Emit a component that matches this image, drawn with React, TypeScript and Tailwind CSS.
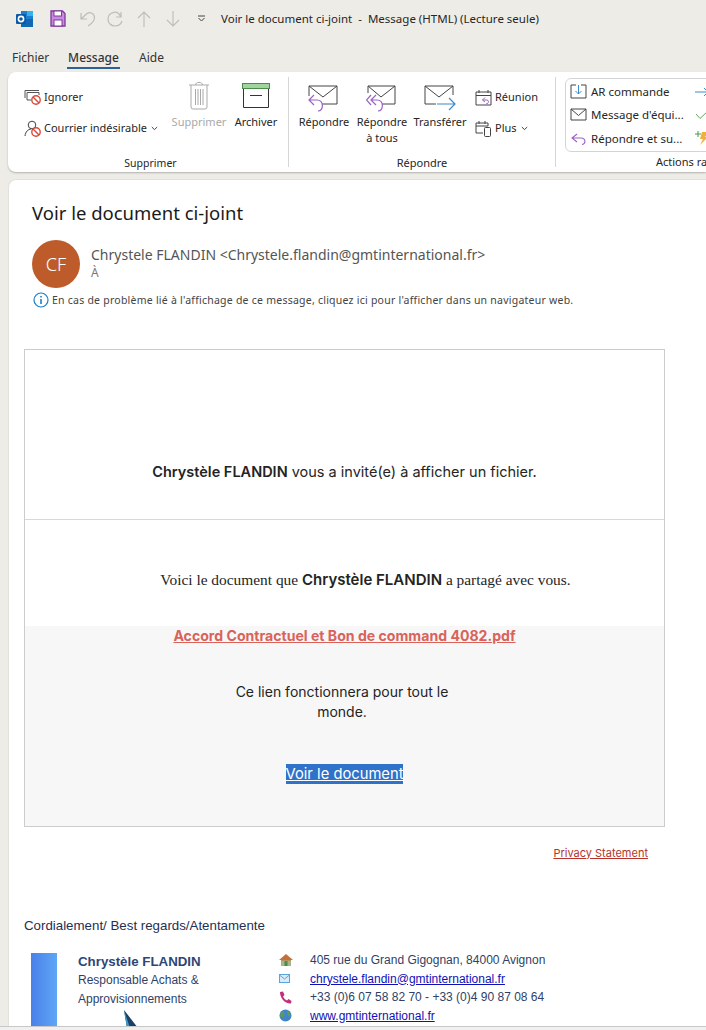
import * as React from 'react';

const UI_FONT = "font-['Noto_Sans',sans-serif]";

function Svg({ w, h, children, className }: { w: number; h: number; children: React.ReactNode; className?: string }) {
  return (
    <svg width={w} height={h} viewBox={`0 0 ${w} ${h}`} fill="none" className={`shrink-0 ${className ?? ''}`}>
      {children}
    </svg>
  );
}

function OutlookLogo() {
  return (
    <Svg w={18} h={18}>
      <rect x="5" y="1" width="12" height="15" fill="#1d7fd0" />
      <rect x="11" y="1" width="6" height="5" fill="#38b0ea" />
      <path d="M5 9 L17 9 L17 17 L5 17 Z" fill="#1268b3" />
      <rect x="0" y="4" width="10" height="10" rx="1" fill="#0c5aa6" />
      <circle cx="5" cy="9" r="2.6" stroke="#fff" strokeWidth="1.6" />
    </Svg>
  );
}

function SaveIcon() {
  return (
    <Svg w={16} h={17} className="ml-4">
      <path d="M1 1 H12.5 L15 3.5 V16 H1 Z" fill="#c78be0" stroke="#7d3a98" strokeWidth="1.3" />
      <rect x="4" y="1" width="7.5" height="5" fill="#fff" stroke="#7d3a98" />
      <rect x="4" y="10" width="8" height="6" fill="#fff" stroke="#7d3a98" />
    </Svg>
  );
}

function QuickIcons() {
  const c = '#bdbdb8';
  return (
    <>
      <Svg w={16} h={16} className="ml-[14px]">
        <path d="M1 2 V8 H7 M1.5 7.5 L7 2.5 C10 0.5 14.5 2.5 14.5 6.5 C14.5 9.5 12 12.5 8 15" stroke={c} strokeWidth="1.2" />
      </Svg>
      <Svg w={16} h={16} className="ml-[11px]">
        <path d="M14 1 V6 H9 M13.5 5.5 C12 2 9 1 7 1.3 C3.5 2 1 4.5 1 8 C1 12 4 15 8 15 C11.5 15 14 13 15 10" stroke={c} strokeWidth="1.2" />
      </Svg>
      <Svg w={14} h={16} className="ml-[14px]">
        <path d="M7 16 V1 M1 7 L7 1 L13 7" stroke={c} strokeWidth="1.1" />
      </Svg>
      <Svg w={14} h={16} className="ml-[15px]">
        <path d="M7 0 V15 M1 9 L7 15 L13 9" stroke={c} strokeWidth="1.1" />
      </Svg>
    </>
  );
}

function Ban({ x, y }: { x: number; y: number }) {
  return (
    <g>
      <circle cx={x} cy={y} r="4.2" fill="#fff" stroke="#d9483b" strokeWidth="1.4" />
      <path d={`M${x - 3} ${y - 3} L${x + 3} ${y + 3}`} stroke="#d9483b" strokeWidth="1.4" />
    </g>
  );
}

function IgnoreIcon() {
  return (
    <Svg w={17} h={16}>
      <path d="M1 1.5 H15 M1 1.5 V9 M3 3.5 H15 V6 M3 3.5 V11 H7" stroke="#555" strokeWidth="1" />
      <Ban x={12} y={11} />
    </Svg>
  );
}

function JunkIcon() {
  return (
    <Svg w={17} h={17}>
      <circle cx="8" cy="5" r="3.8" stroke="#444" />
      <path d="M1 16 C1.5 11.5 4 9.5 7 9" stroke="#444" />
      <Ban x={12} y={12} />
    </Svg>
  );
}

function TrashIcon() {
  const c = '#a9a9a9';
  return (
    <Svg w={22} h={29}>
      <path d="M1 4 H21 M7.5 4 C7.5 0.5 14.5 0.5 14.5 4" stroke={c} />
      <path d="M3 4 V26 Q3 28 5 28 H17 Q19 28 19 26 V4" stroke={c} />
      <path d="M7.5 8 V24 M10 8 V24 M12.5 8 V24 M15 8 V24" stroke={c} />
    </Svg>
  );
}

function ArchiveIcon() {
  return (
    <Svg w={28} h={25}>
      <rect x="0.5" y="0.5" width="27" height="5" fill="#9fd59c" stroke="#4d8a4d" />
      <path d="M1.5 6 V24.5 H26.5 V6" stroke="#333" />
      <path d="M8 12.5 H20" stroke="#333" />
    </Svg>
  );
}

function ReplyIcon() {
  return (
    <Svg w={32} h={28}>
      <path d="M1 1 H29 V19 H14 M1 1 V11 M1 1 L15 12 L29 1" stroke="#444" fill="none" />
      <path d="M6 10 L1 15 L6 20 M1 15 H9 C16 15 16 26 10 26" stroke="#9a63c4" strokeWidth="1.2" />
    </Svg>
  );
}

function ReplyAllIcon() {
  return (
    <Svg w={32} h={28}>
      <path d="M2 1 H29 V19 H16 M2 1 V8 M2 1 L15 12 L29 1" stroke="#444" />
      <path d="M5 10 L0.5 15 L5 20 M10 10 L5 15 L10 20 M5 15 H11 C18 15 18 26 12 26" stroke="#9a63c4" strokeWidth="1.2" />
    </Svg>
  );
}

function ForwardIcon() {
  return (
    <Svg w={32} h={28}>
      <path d="M1 19 V1 H29 V10 M1 19 H12" stroke="#444" />
      <path d="M1 1 L15 12 L29 1" stroke="#444" />
      <path d="M13 19 H30 M25 13 L31 19 L25 25" stroke="#3a8cc7" strokeWidth="1.2" />
    </Svg>
  );
}

function MeetingIcon() {
  return (
    <Svg w={17} h={17}>
      <path d="M1 3 H16 V16 H1 Z M1 6.5 H16 M4 1 V4 M13 1 V4" stroke="#444" />
      <path d="M10 8.5 L7.5 11 L10 13 M7.5 11 H12 C14 11 14 15 11 15" stroke="#9a63c4" />
    </Svg>
  );
}

function MoreIcon() {
  return (
    <Svg w={17} h={17}>
      <path d="M1 13 V3 H13 V6 M1 6 H13 M4 1 V4 M10 1 V4 M1 13 H8" stroke="#444" />
      <rect x="9.5" y="7.5" width="6" height="9" rx="1" fill="#fff" stroke="#444" />
    </Svg>
  );
}

function Chevron() {
  return (
    <svg width="7" height="5" viewBox="0 0 7 5" fill="none" className="ml-[1px] shrink-0">
      <path d="M0.8 1 L3.5 3.6 L6.2 1" stroke="#444" />
    </svg>
  );
}

function BigButton({
  icon,
  label,
  disabled,
  className,
  iconClass = 'items-start pt-[1px]',
}: {
  icon: React.ReactNode;
  label: React.ReactNode;
  disabled?: boolean;
  className?: string;
  iconClass?: string;
}) {
  return (
    <div className={`flex flex-col items-center ${className ?? ''}`}>
      <div className={`flex h-[33px] ${iconClass}`}>{icon}</div>
      <div className={`mt-[1px] text-center text-[11px] leading-[16px] whitespace-nowrap ${disabled ? 'text-[#a9a9a9]' : 'text-[#262626]'}`}>
        {label}
      </div>
    </div>
  );
}

function QuickStep({ icon, label }: { icon: React.ReactNode; label: string }) {
  return (
    <div className="flex h-6 items-center gap-[4px] text-[11.5px] whitespace-nowrap text-[#262626]">
      <span className="flex w-[17px] justify-center">{icon}</span>
      {label}
    </div>
  );
}

function Ribbon() {
  return (
    <div className={`ml-2 flex h-[100px] shrink-0 overflow-hidden rounded-l-lg bg-white shadow-[0_1px_2px_rgba(0,0,0,0.25)] ${UI_FONT}`}>
      {/* Supprimer */}
      <div className="flex w-[280px] shrink-0 flex-col">
        <div className="flex h-[78px] pt-[8px]">
          <div className="ml-4 flex w-[147px] flex-col gap-[15px] pt-[9px] text-[11px] text-[#262626]">
            <div className="flex h-4 items-center gap-[3px]">
              <IgnoreIcon />
              Ignorer
            </div>
            <div className="flex h-4 items-center gap-[3px]">
              <JunkIcon />
              Courrier indésirable
              <Chevron />
            </div>
          </div>
          <BigButton icon={<TrashIcon />} label="Supprimer" disabled className="w-[56px]" />
          <BigButton icon={<ArchiveIcon />} label="Archiver" iconClass="items-start pt-[3px]" className="ml-[6px] w-[46px]" />
        </div>
        <div className="pt-[5px] pl-[5px] text-center text-[10.5px] leading-4 text-[#262626]">Supprimer</div>
      </div>
      <div className="my-[5px] w-px shrink-0 bg-[#d6d6d6]" />
      {/* Répondre */}
      <div className="flex w-[266px] shrink-0 flex-col">
        <div className="flex h-[78px] pt-[8px] pl-[9px]">
          <BigButton icon={<ReplyIcon />} label="Répondre" iconClass="items-end" className="w-[52px]" />
          <BigButton icon={<ReplyAllIcon />} label={<>Répondre<br />à tous</>} iconClass="items-end" className="ml-[6px] w-[52px]" />
          <BigButton icon={<ForwardIcon />} label="Transférer" iconClass="items-end" className="ml-[6px] w-[52px]" />
          <div className="ml-[9px] flex flex-col gap-[15px] pt-[9px] text-[11px] text-[#262626]">
            <div className="flex h-4 items-center gap-[3px]">
              <MeetingIcon />
              Réunion
            </div>
            <div className="flex h-4 items-center gap-[3px]">
              <MoreIcon />
              Plus
              <Chevron />
            </div>
          </div>
        </div>
        <div className="pt-[5px] text-center text-[11px] leading-4 text-[#262626]">Répondre</div>
      </div>
      <div className="my-[5px] w-px shrink-0 bg-[#d6d6d6]" />
      {/* Actions rapides, cut off by the window edge */}
      <div className="flex w-[300px] shrink-0 flex-col pl-[9px]">
        <div className="mt-[6px] flex h-[74px] w-[200px] rounded-md border border-[#d4d4d4] py-[1px] pl-[4px]">
          <div className="flex w-[125px] shrink-0 flex-col">
            <QuickStep
              label="AR commande"
              icon={
                <Svg w={17} h={15}>
                  <path d="M6 1 H1 V14 H16 V1 H11" stroke="#444" />
                  <path d="M8.5 1 V10 M5.5 7 L8.5 10 L11.5 7" stroke="#3a8cc7" />
                </Svg>
              }
            />
            <QuickStep
              label="Message d'équi..."
              icon={
                <Svg w={17} h={13}>
                  <path d="M1 1 H16 V12 H1 Z M1 1 L8.5 7.5 L16 1" stroke="#444" />
                </Svg>
              }
            />
            <QuickStep
              label="Répondre et su..."
              icon={
                <Svg w={16} h={14}>
                  <path d="M6 3 L1 7 L6 11 M1 7 H10 C15 7 15 13 11 13.5" stroke="#9a63c4" strokeWidth="1.1" />
                </Svg>
              }
            />
          </div>
          <div className="flex flex-col">
            <div className="flex h-6 items-center">
              <Svg w={14} h={10}>
                <path d="M0 5 H14 M9 1 L13 5 L9 9" stroke="#3a8cc7" />
              </Svg>
            </div>
            <div className="flex h-6 items-center">
              <Svg w={14} h={10}>
                <path d="M1 4 L5 8.5 L13 1" stroke="#5fa85f" />
              </Svg>
            </div>
            <div className="flex h-6 items-center">
              <Svg w={14} h={16}>
                <path d="M0 4 H6 M3 1 V7" stroke="#4d9a4d" />
                <path d="M7 2 H14 L10 7 H13 L5 15 L8 9 H5 Z" fill="#f0b040" />
              </Svg>
            </div>
          </div>
        </div>
        <div className="pt-[2px] pl-[91px] text-[11px] leading-4 whitespace-nowrap text-[#262626]">Actions rapides</div>
      </div>
    </div>
  );
}

function EmailBody() {
  return (
    <div className="mt-[40px] ml-[15px] w-[641px] shrink-0 border border-[#cccccc] bg-white">
      <div className="flex h-[170px] items-end justify-center border-b border-[#d8d8d8] pb-[37px] font-['Inter',sans-serif] text-[14.5px] leading-5 text-[#242424]">
        <div>
          <span className="font-semibold">Chrystèle FLANDIN</span> vous a invité(e) à afficher un fichier.
        </div>
      </div>
      <div className="flex h-[106px] items-start justify-center pt-[50px] pl-[42px] font-['Liberation_Serif',serif] text-[15.4px] leading-5 text-[#242424]">
        <div>
          Voici le document que{' '}
          <span className="font-['Inter',sans-serif] text-[15px] font-semibold">Chrystèle FLANDIN</span> a partagé avec vous.
        </div>
      </div>
      <div className="flex h-[200px] flex-col items-center bg-[#f7f7f7] font-['Inter',sans-serif] text-[#242424]">
        <a className="mt-[1px] text-[14.1px] leading-[18px] font-bold text-[#d9635a] underline">
          Accord Contractuel et Bon de command 4082.pdf
        </a>
        <div className="mt-[37px] mr-[5px] w-[240px] text-center text-[14px] leading-5">Ce lien fonctionnera pour tout le monde.</div>
        <a className="mt-[42px] bg-[#2f72c9] text-[14.75px] leading-5 text-white underline">Voir le document</a>
      </div>
    </div>
  );
}

function Signature() {
  return (
    <div className="mt-[18px] ml-[22px] flex h-[73px] shrink-0 overflow-hidden font-['Liberation_Sans',sans-serif] text-[#2f3f66]">
      <div className="h-full w-[26px] shrink-0 bg-gradient-to-r from-[#4a80ea] to-[#5fa6f5]" />
      <div className="relative ml-[21px] w-[201px] shrink-0">
        <div className="text-[13.3px] leading-[18px] font-bold text-[#2e4674]">Chrystèle FLANDIN</div>
        <div className="text-[12px] leading-[19px]">Responsable Achats &amp;</div>
        <div className="text-[12px] leading-[19px]">Approvisionnements</div>
        <svg width="18" height="18" viewBox="0 0 18 18" className="absolute top-[57px] left-[44px]">
          <path d="M2 0 L16 18 H5 Z" fill="#1c3f66" />
          <path d="M2 0 L5 18 H8 Z" fill="#3f9ac9" />
        </svg>
      </div>
      <div className="-mt-[2px] flex flex-col text-[12px] leading-[18.5px]">
        <div className="flex h-[18.5px] items-center">
          <span className="w-[31px]">
            <Svg w={14} h={13}>
              <path d="M7 0 L14 6 H12 V12 H2 V6 H0 Z" fill="#c2703c" />
              <rect x="2" y="6.5" width="10" height="5.5" fill="#a8b58a" />
              <rect x="5.5" y="7" width="3" height="5" fill="#4e8a4e" />
            </Svg>
          </span>
          405 rue du Grand Gigognan, 84000 Avignon
        </div>
        <div className="flex h-[18.5px] items-center">
          <span className="w-[31px]">
            <Svg w={11} h={9}>
              <rect x="0.5" y="0.5" width="10" height="8" fill="#d8ebfa" stroke="#5ba3dd" />
              <path d="M0.5 1 L5.5 5 L10.5 1" stroke="#5ba3dd" />
            </Svg>
          </span>
          <a className="text-[#1010b8] underline">chrystele.flandin@gmtinternational.fr</a>
        </div>
        <div className="flex h-[18.5px] items-center">
          <span className="w-[31px]">
            <Svg w={13} h={13}>
              <path d="M1 1 L4 0.5 L5.5 4 L4 5.5 C5 7.5 6 8.5 8 9.5 L9.5 8 L12.5 10 L12 12.5 C6 13 1 7 1 1 Z" fill="#c0307a" />
            </Svg>
          </span>
          +33 (0)6 07 58 82 70 - +33 (0)4 90 87 08 64
        </div>
        <div className="flex h-[18.5px] items-center">
          <span className="w-[31px]">
            <Svg w={13} h={13}>
              <circle cx="6.5" cy="6.5" r="6" fill="#3f86c9" />
              <path d="M2 3 C5 2 6 5 5 7 C4 9 2 8 1 7 Z M8 1 C11 3 12 6 11 8 C9 8 8 5 8 1 Z" fill="#5f9a5a" />
            </Svg>
          </span>
          <a className="text-[#1010b8] underline">www.gmtinternational.fr</a>
        </div>
      </div>
    </div>
  );
}

export default function App() {
  return (
    <div className="flex h-[1030px] w-[706px] flex-col overflow-hidden bg-[#eeece7]">
      {/* title bar */}
      <div className={`flex h-[37px] shrink-0 items-center pl-4 ${UI_FONT} text-[11.5px] text-[#262626]`}>
        <div className="flex w-[199px] items-center">
          <OutlookLogo />
          <SaveIcon />
          <QuickIcons />
          <svg width="9" height="7" viewBox="0 0 9 7" fill="none" className="ml-[17px]">
            <path d="M1 1 H8 M1.5 3 L4.5 6 L7.5 3" stroke="#444" />
          </svg>
        </div>
        <div className="ml-[6px] whitespace-pre">Voir le document ci-joint  -  Message (HTML) (Lecture seule)</div>
      </div>

      {/* tabs */}
      <div className={`flex h-[35px] shrink-0 items-start pt-[12px] pl-3 text-[12px] leading-[18px] text-[#333] ${UI_FONT}`}>
        <span className="w-[37px]">Fichier</span>
        <span className="ml-[18px] w-[53px] border-b-2 border-[#2f6095] text-center font-medium">Message</span>
        <span className="ml-[19px]">Aide</span>
      </div>

      <Ribbon />

      {/* reading pane */}
      <div className="mt-[7px] ml-2 flex min-h-0 flex-1 flex-col overflow-hidden rounded-tl-lg border-t border-l border-[#e3e1dc] bg-white">
        <div className={`pl-[23px] ${UI_FONT}`}>
          <div className="pt-[20px] text-[18.5px] leading-[26px] text-[#1a1a1a]">Voir le document ci-joint</div>
          <div className="mt-[14px] flex">
            <div className="flex h-12 w-12 items-center justify-center rounded-full bg-[#bd5b2b] text-[18px] font-light text-white">CF</div>
            <div className="ml-[11px] text-[14px] leading-[19px] text-[#555]">
              <div className="mt-[5px]">Chrystele FLANDIN &lt;Chrystele.flandin@gmtinternational.fr&gt;</div>
              <div className="text-[12px] leading-[17px] text-[#777]">À</div>
            </div>
          </div>
          <div className="mt-[3px] ml-[1px] flex items-center gap-[3px] text-[10.5px] leading-[18px] tracking-[0.24px] text-[#444]">
            <svg width="16" height="16" viewBox="0 0 16 16" fill="none">
              <circle cx="8" cy="8" r="7" stroke="#1c7fc9" strokeWidth="1.2" />
              <path d="M8 7 V12 M8 4 V5.6" stroke="#1c7fc9" strokeWidth="1.6" />
            </svg>
            En cas de problème lié à l'affichage de ce message, cliquez ici pour l'afficher dans un navigateur web.
          </div>
        </div>

        <EmailBody />

        <div className="mt-[19px] w-[639px] shrink-0 text-right font-['Inter',sans-serif] text-[11px] leading-[14px] text-[#b5332c] underline">
          Privacy Statement
        </div>
        <div className="mt-[57px] ml-[15px] shrink-0 font-['Liberation_Sans',sans-serif] text-[13.3px] leading-[18px] text-[#1f2f55]">
          Cordialement/ Best regards/Atentamente
        </div>
        <Signature />
      </div>

      {/* status bar */}
      <div className="h-[4px] shrink-0 border-t border-[#c8c8c8] bg-[#f0f0f0]" />
    </div>
  );
}
